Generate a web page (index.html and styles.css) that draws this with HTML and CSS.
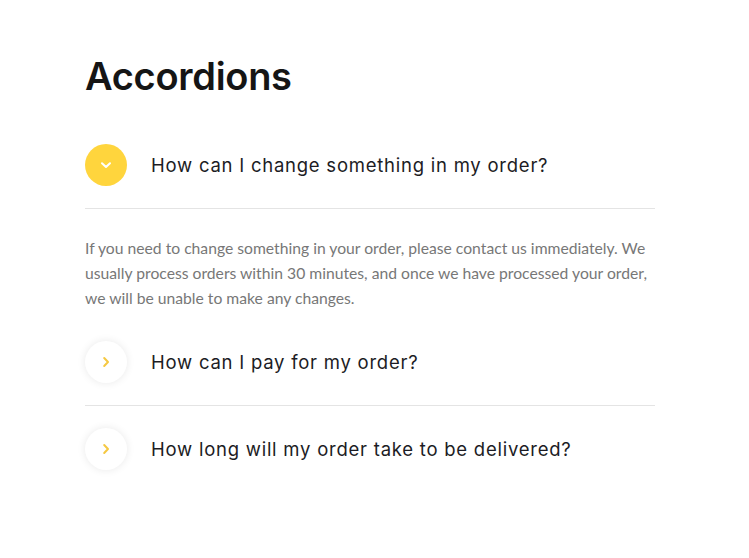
FILE: index.html
```html
<!DOCTYPE html>
<html lang="en">
<head>
<meta charset="utf-8">
<title>Accordions</title>
<link rel="stylesheet" href="styles.css">
</head>
<body>
<main class="page">
  <h1 class="title">Accordions</h1>
  <div class="accordion">
    <div class="item open">
      <div class="head">
        <span class="icon icon-open">
          <svg width="14" height="14" viewBox="0 0 14 14"><path d="M3 5.2 L7 9 L11 5.2" fill="none" stroke="#fff" stroke-width="2" stroke-linecap="round" stroke-linejoin="round"/></svg>
        </span>
        <span class="q">How can I change something in my order?</span>
      </div>
      <div class="body">
        <p>If you need to change something in your order, please contact us immediately. We usually process orders within 30 minutes, and once we have processed your order, we will be unable to make any changes.</p>
      </div>
    </div>
    <div class="item">
      <div class="head">
        <span class="icon icon-closed">
          <svg width="14" height="14" viewBox="0 0 14 14"><path d="M5.2 3 L9 7 L5.2 11" fill="none" stroke="#f5c842" stroke-width="2" stroke-linecap="round" stroke-linejoin="round"/></svg>
        </span>
        <span class="q">How can I pay for my order?</span>
      </div>
    </div>
    <div class="item last">
      <div class="head">
        <span class="icon icon-closed">
          <svg width="14" height="14" viewBox="0 0 14 14"><path d="M5.2 3 L9 7 L5.2 11" fill="none" stroke="#f5c842" stroke-width="2" stroke-linecap="round" stroke-linejoin="round"/></svg>
        </span>
        <span class="q">How long will my order take to be delivered?</span>
      </div>
    </div>
  </div>
</main>
</body>
</html>
```
FILE: styles.css
```css
html, body {
  margin: 0;
  padding: 0;
  background: #ffffff;
}
.page {
  width: 570px;
  padding: 52px 0 0 85px;
}
.title {
  margin: 0 0 22px 0;
  font-family: "Inter", "Open Sans", sans-serif;
  font-weight: 600;
  font-size: 38px;
  line-height: 48px;
  letter-spacing: -0.3px;
  color: #151515;
}
.item .head {
  display: flex;
  align-items: center;
  gap: 24px;
  padding: 22px 0;
  border-bottom: 1px solid #e4e4e4;
}
.item.last .head {
  border-bottom: none;
}
.icon {
  width: 42px;
  height: 42px;
  border-radius: 50%;
  display: flex;
  align-items: center;
  justify-content: center;
  flex: none;
}
.icon-open {
  background: #ffd53d;
}
.icon-closed {
  background: #fff;
  box-shadow: 0 0 8px rgba(0, 0, 0, 0.09);
}
.q {
  font-family: "Inter", "Open Sans", sans-serif;
  font-size: 18.5px;
  font-weight: 400;
  color: #1c1c24;
  letter-spacing: 0.76px;
}
.body {
  padding: 27px 0 8px 0;
}
.body p {
  margin: 0;
  font-family: "Lato", sans-serif;
  font-size: 15.7px;
  line-height: 25px;
  color: #777777;
}
```
